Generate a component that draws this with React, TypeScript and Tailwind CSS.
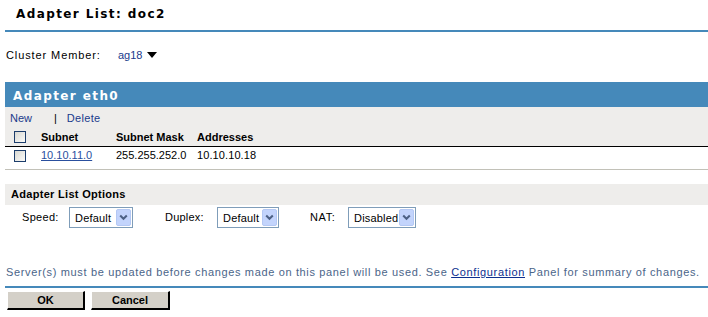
import React from 'react';

function Check() {
  return (
    <span className="block w-[12px] h-[12px] border border-[#1c3d6b] bg-gradient-to-br from-[#d8d8d2] to-[#fbfbf9]" />
  );
}

function Select({ value, width }: { value: string; width: string }) {
  return (
    <div className={`flex items-center h-[21px] border border-[#7f9db9] bg-white pl-[5px] pr-[1px] ${width}`}>
      <span className="flex-1 text-[11px] tracking-[0.2px] text-black leading-[14px]">{value}</span>
      <span className="flex items-center justify-center w-[15px] h-[17px] rounded-[2px] bg-[#c3d4fc] border border-[#b4c8f4]">
        <svg width="9" height="7" viewBox="0 0 9 7">
          <path d="M1.2 1.5 L4.5 4.8 L7.8 1.5" stroke="#4d6185" strokeWidth="2" fill="none" />
        </svg>
      </span>
    </div>
  );
}

export default function App() {
  return (
    <div className="w-[708px] h-[317px] bg-white font-['Liberation_Sans',Arial,sans-serif] text-[11px] text-black overflow-hidden">
      {/* Title */}
      <div className="h-[30px] pl-[16px] pt-[6px] font-['DejaVu_Sans',sans-serif] text-[12px] font-bold tracking-[1.4px] leading-[16px]">
        Adapter List: doc2
      </div>
      <div className="ml-[5px] h-[2px] bg-[#4589ba]" />

      {/* Cluster member */}
      <div className="h-[50px] pl-[6px] pt-[16px] flex items-start leading-[14px]">
        <span className="w-[112px] tracking-[0.9px]">Cluster Member:</span>
        <span className="text-[#1a3b8c]">ag18</span>
        <svg className="ml-[5px] mt-[4px]" width="10" height="6" viewBox="0 0 10 6">
          <path d="M0 0 H10 L5 6 Z" fill="#000" />
        </svg>
      </div>

      {/* Adapter panel */}
      <div className="ml-[5px]">
        <div className="h-[25px] bg-[#4589ba] pl-[8px] pt-[7px] text-white font-['DejaVu_Sans',sans-serif] text-[12px] leading-[14px] font-bold tracking-[1.4px]">
          Adapter eth0
        </div>
        <div className="h-[40px] bg-[#eeedeb] border-b border-black">
          <div className="flex pl-[5px] pt-[4px] h-[22px] text-[#1a3b8c] leading-[14px]">
            <span className="w-[44px]">New</span>
            <span className="text-black">|</span>
            <span className="ml-[10px] tracking-[0.3px]">Delete</span>
          </div>
          <div className="flex items-start h-[17px] font-bold leading-[14px]">
            <span className="w-[36px] pl-[9px] pt-[2px]"><Check /></span>
            <span className="w-[75px] pt-[1px]">Subnet</span>
            <span className="w-[81px] pt-[1px]">Subnet Mask</span>
            <span className="pt-[1px]">Addresses</span>
          </div>
        </div>
        <div className="h-[23px] flex items-start pt-[1px] border-b border-[#c2c1b8] leading-[14px]">
          <span className="w-[36px] pl-[9px] pt-[2px]"><Check /></span>
          <span className="w-[75px] text-[#2a4f9e] underline">10.10.11.0</span>
          <span className="w-[81px]">255.255.252.0</span>
          <span className="tracking-[0.1px]">10.10.10.18</span>
        </div>
      </div>

      {/* Options */}
      <div className="ml-[5px] mt-[14px] h-[21px] bg-[#eeedeb] pl-[6px] flex items-center font-bold tracking-[0.3px]">
        Adapter List Options
      </div>
      <div className="flex items-center h-[23px] pt-[2px]">
        <span className="w-[69px] pl-[22px] tracking-[0.3px]">Speed:</span>
        <Select value="Default" width="w-[64px]" />
        <span className="ml-[32px] w-[52px] tracking-[0.2px]">Duplex:</span>
        <Select value="Default" width="w-[62px]" />
        <span className="ml-[31px] w-[38px] tracking-[0.6px]">NAT:</span>
        <Select value="Disabled" width="w-[68px]" />
      </div>

      {/* Footer */}
      <div className="pl-[6px] pt-[37px] h-[58px] text-[#4b6589] leading-[14px] tracking-[0.65px] whitespace-nowrap">
        Server(s) must be updated before changes made on this panel will be used. See{' '}
        <span className="text-[#0d2f8f] underline">Configuration</span> Panel for summary of changes.
      </div>
      <div className="ml-[5px] h-[2px] bg-[#4589ba]" />
      <div className="flex gap-[6px] pl-[7px] pt-[3px]">
        <button className="w-[78px] h-[19px] bg-[#d4d0c8] border-t border-l border-white border-r-2 border-b-2 border-r-black border-b-black font-bold text-[11px] leading-[14px]">
          OK
        </button>
        <button className="w-[79px] h-[19px] bg-[#d4d0c8] border-t border-l border-white border-r-2 border-b-2 border-r-black border-b-black font-bold text-[11px] leading-[14px]">
          Cancel
        </button>
      </div>
    </div>
  );
}
